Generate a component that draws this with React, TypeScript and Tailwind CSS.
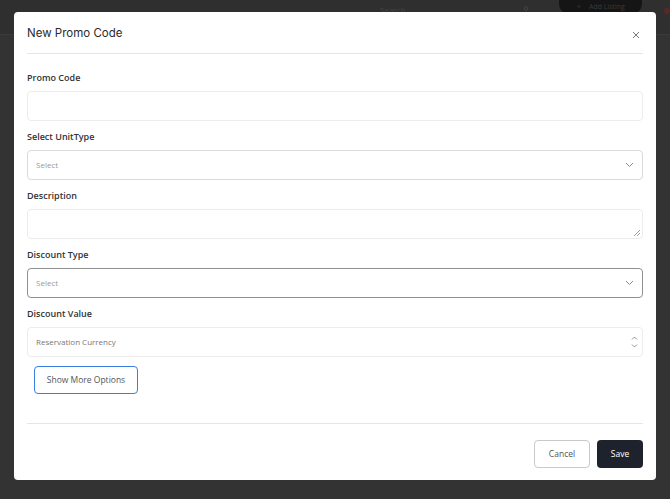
import React from "react";

const font = { fontFamily: '"Open Sans", "Liberation Sans", sans-serif' };

function Chevron() {
  return (
    <svg width="9" height="6" viewBox="0 0 9 6" fill="none" className="text-[#8a8a8a]">
      <path d="M1 1l3.5 3.5L8 1" stroke="currentColor" strokeWidth="1" />
    </svg>
  );
}

function Label({ children }: { children: React.ReactNode }) {
  return (
    <div className="h-[18px] pt-[1px] flex items-center text-[9px] font-semibold text-[#333]">{children}</div>
  );
}

export default function App() {
  return (
    <div className="relative w-[670px] h-[499px] bg-[#333333] overflow-hidden" style={font}>
      {/* dimmed background header */}
      <div className="h-[35px] border-b border-[#3a3a3a] bg-[#2f2f2f] flex items-start">
        <div className="ml-[380px] mt-[4px] text-[8px] text-[#444]">Search...</div>
        <div className="ml-[112px] mt-[6px] w-[5px] h-[5px] rounded-full border border-[#444]" />
        <div className="ml-[31px] w-[90px] h-[14px] rounded-b-[10px] bg-[#151515] flex items-center justify-center gap-2 text-[7px] leading-[10px] text-[#3a3a3a]">
          <span>+</span>
          <span>Add Listing</span>
        </div>
        <div className="ml-[22px] mt-[8px] w-[6px] h-[6px] rounded-full bg-[#5a2a22]" />
      </div>

      {/* modal */}
      <div className="absolute left-[14px] top-[12px] w-[642px] h-[468px] bg-white rounded-[4px] px-[13px] flex flex-col">
        <div className="h-[42px] flex items-start justify-between border-b border-[#e6e6e8]">
          <div
            className="mt-[13px] text-[11.5px] leading-[16px] text-[#2b2b2b]"
            style={{ fontFamily: 'Inter, "Liberation Sans", sans-serif' }}
          >
            New Promo Code
          </div>
          <svg width="8" height="8" viewBox="0 0 8 8" className="mt-[19px] mr-[3px] text-[#777]">
            <path d="M1 1l6 6M7 1L1 7" stroke="currentColor" strokeWidth="1" />
          </svg>
        </div>

        <div className="mt-[14px] flex flex-col">
          <Label>Promo Code</Label>
          <div className="mt-[5px] h-[30px] rounded-[4px] border border-[#ececec]" />

          <div className="mt-[6px]">
            <Label>Select UnitType</Label>
          </div>
          <div className="mt-[5px] h-[30px] rounded-[4px] border border-[#dadada] flex items-center justify-between pl-[8px] pr-[8px]">
            <span className="text-[8px] text-[#9a9a9a]">Select</span>
            <Chevron />
          </div>

          <div className="mt-[6px]">
            <Label>Description</Label>
          </div>
          <div className="mt-[5px] h-[30px] rounded-[4px] border border-[#ececec] relative">
            <svg width="6" height="6" viewBox="0 0 6 6" className="absolute right-[2px] bottom-[2px] text-[#888]">
              <path d="M6 0L0 6M6 3L3 6" stroke="currentColor" strokeWidth="0.8" />
            </svg>
          </div>

          <div className="mt-[6px]">
            <Label>Discount Type</Label>
          </div>
          <div className="mt-[5px] h-[30px] rounded-[4px] border border-[#8f8f8f] flex items-center justify-between pl-[8px] pr-[8px]">
            <span className="text-[8px] text-[#9a9a9a]">Select</span>
            <Chevron />
          </div>

          <div className="mt-[6px]">
            <Label>Discount Value</Label>
          </div>
          <div className="mt-[5px] h-[30px] rounded-[4px] border border-[#ececec] flex items-center justify-between pl-[8px] pr-[4px]">
            <span className="text-[8px] text-[#777]">Reservation Currency</span>
            <div className="flex flex-col gap-[4px] text-[#888]">
              <svg width="7" height="4" viewBox="0 0 7 4" fill="none">
                <path d="M1 3.5L3.5 1L6 3.5" stroke="currentColor" strokeWidth="0.9" />
              </svg>
              <svg width="7" height="4" viewBox="0 0 7 4" fill="none">
                <path d="M1 0.5L3.5 3L6 0.5" stroke="currentColor" strokeWidth="0.9" />
              </svg>
            </div>
          </div>

          <div className="mt-[8px] ml-[7px]">
            <button className="w-[104px] h-[28px] rounded-[4px] border-[1.5px] border-[#3b7de0] text-[8.5px] text-[#555] bg-white">
              Show More Options
            </button>
          </div>
        </div>

        <div className="mt-[29px] border-t border-[#e6e6e8]" />

        <div className="mt-[16px] flex justify-end gap-[7px]">
          <button className="w-[56px] h-[28px] rounded-[4px] border border-[#c9c9c9] text-[8.5px] text-[#555] bg-white">
            Cancel
          </button>
          <button className="w-[46px] h-[28px] rounded-[4px] bg-[#1e222d] text-[8.5px] text-white">Save</button>
        </div>
      </div>
    </div>
  );
}
